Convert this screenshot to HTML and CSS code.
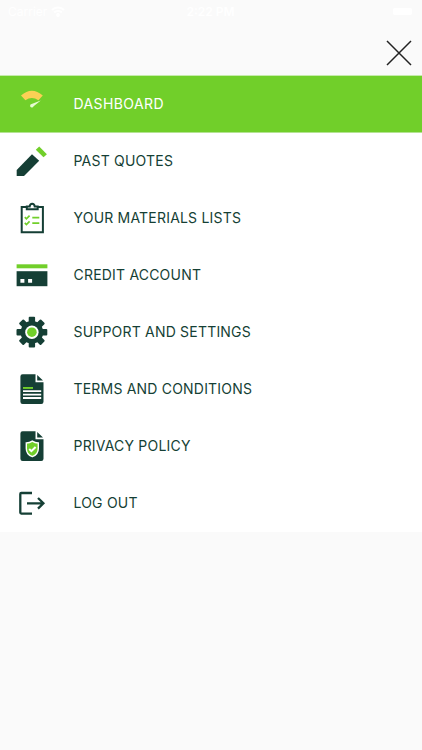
FILE: index.html
```html
<!DOCTYPE html>
<html lang="en">
<head>
    <meta charset="UTF-8">
    <title>Menu</title>
    <link rel="stylesheet" href="styles.css">
</head>
<body>
<header class="header">
    <div class="status">
        <div class="carrier">
            <span>Carrier</span>
            <svg class="wifi" viewBox="0 0 14 11">
                <path d="M1 4a8.500 8.500 0 0 1 12 0M3.200 6.500a5.400 5.400 0 0 1 7.600 0"/>
                <circle cx="7" cy="9" r="1"/>
            </svg>
        </div>
        <span class="time">2:22 PM</span>
        <div class="battery"><i></i></div>
    </div>
    <button class="close" aria-label="Close">
        <svg viewBox="0 0 26 26"><path d="M1 1l24 24M25 1L1 25"/></svg>
    </button>
</header>
<ul class="menu">
    <li class="active">
        <svg class="icon" viewBox="0 0 32 32">
            <path class="yellow" d="M5 7.500Q15.800 -2 26.800 7.500L22.400 12.200Q15.800 7.800 9.400 12.200Z"/>
            <path class="pale" d="M24.800 12.600L17.600 18.200A1.800 1.800 0 1 1 15.600 15.900Z"/>
        </svg>
        <span>DASHBOARD</span>
    </li>
    <li>
        <svg class="icon" viewBox="0 0 32 32">
            <path class="dark" d="M.7 25L16 9.200L23.200 15.700L8 31H.7Z"/>
            <path class="green" d="M23.200 1.600L30.900 9.200L27.500 12.200L19.800 4.700Z"/>
        </svg>
        <span>PAST QUOTES</span>
    </li>
    <li>
        <svg class="icon" viewBox="0 0 32 32">
            <path class="line" d="M10.500 4.900H5.700V30.300H26.900V4.900H22M10.800 7.200V4.500H13.700Q14 1.800 16.200 1.800T18.700 4.500H21.700V7.200Z"/>
            <path class="line tick" d="M8.800 15.200l1.600 1.600 3.200-3.200M8.800 20.900l1.600 1.600 3.200-3.200M16.300 15.700h7M16.300 21.200h7"/>
        </svg>
        <span>YOUR MATERIALS LISTS</span>
    </li>
    <li>
        <svg class="icon" viewBox="0 0 32 32">
            <path class="green" d="M.6 5.300h30.800v4H.6z"/>
            <path class="dark" d="M.6 12.200h30.800v15H.6z"/>
            <path class="white" d="M4.400 20h4v3.700h-4zM12.100 20h4v3.700h-4z"/>
        </svg>
        <span>CREDIT ACCOUNT</span>
    </li>
    <li>
        <svg class="icon" viewBox="0 0 32 32">
            <g class="dark" transform="translate(15.900 16.200)">
                <circle r="11.300"/>
                <rect x="-3.200" y="-15.400" width="6.400" height="30.800" rx="1"/>
                <rect x="-3.200" y="-15.400" width="6.400" height="30.800" rx="1" transform="rotate(45)"/>
                <rect x="-3.200" y="-15.400" width="6.400" height="30.800" rx="1" transform="rotate(90)"/>
                <rect x="-3.200" y="-15.400" width="6.400" height="30.800" rx="1" transform="rotate(135)"/>
            </g>
            <circle class="white" cx="15.900" cy="16.200" r="6.700"/>
            <circle class="green" cx="15.900" cy="16.200" r="4.800"/>
        </svg>
        <span>SUPPORT AND SETTINGS</span>
    </li>
    <li>
        <svg class="icon" viewBox="0 0 32 32">
            <path class="dark" d="M7 1.300H19.500V9.300H27.500V28.700a2.200 2.200 0 0 1-2.200 2.200H6.600a2.200 2.200 0 0 1-2.200-2.200V3.500A2.200 2.200 0 0 1 6.600 1.300ZM21.200 1.900L27 7.600H21.200Z"/>
            <path class="green" d="M7 14h10v1.900H7z"/>
            <path class="white" d="M7 17.300h18.200v1.800H7zM7 20.700h18.200v1.800H7zM7 24.100h18.200v1.900H7z"/>
        </svg>
        <span>TERMS AND CONDITIONS</span>
    </li>
    <li>
        <svg class="icon" viewBox="0 0 32 32">
            <path class="dark" d="M7 1.300H19.500V9.300H27.500V28.700a2.200 2.200 0 0 1-2.200 2.200H6.600a2.200 2.200 0 0 1-2.200-2.200V3.500A2.200 2.200 0 0 1 6.600 1.300ZM21.200 1.900L27 7.600H21.200Z"/>
            <path class="shield" d="M16.300 11.100Q19 13 22.300 13V18.500Q22.300 24.500 16.300 26.700Q10.300 24.500 10.300 18.500V13Q13.600 13 16.300 11.100Z"/>
            <path class="line check" d="M13.200 19l2.200 2.200 4.200-4.200"/>
        </svg>
        <span>PRIVACY POLICY</span>
    </li>
    <li>
        <svg class="icon" viewBox="0 0 32 32">
            <path class="line exit" d="M16 6H5.300Q4.300 6 4.300 7V25.600Q4.300 26.600 5.300 26.600H16M11 16.300H27.500M22 11l5.400 5.300-5.400 5.300"/>
        </svg>
        <span>LOG OUT</span>
    </li>
</ul>
</body>
</html>
```

FILE: styles.css
```css
* {
    margin: 0;
    padding: 0;
    box-sizing: border-box;
}
body {
    background: #fafafa;
    font-family: Inter, "Liberation Sans", sans-serif;
    color: #153f35;
}
ul, li {
    list-style: none;
}
.header {
    height: 75px;
}
.status {
    display: grid;
    grid-template-columns: 1fr auto 1fr;
    align-items: center;
    height: 22px;
    padding: 0 9px 0 8px;
    font-size: 12px;
    color: #fff;
}
.carrier {
    display: flex;
    align-items: center;
    gap: 4px;
}
.wifi {
    width: 14px;
    height: 11px;
    fill: none;
    stroke: #fff;
    stroke-width: 2;
}
.time {
    font-weight: 600;
}
.battery {
    justify-self: end;
    width: 21px;
    height: 9px;
    padding: 1px;
}
.battery i {
    display: block;
    height: 7px;
    border-radius: 2px;
    background: #fff;
}
.close {
    display: block;
    width: 26px;
    height: 26px;
    margin: 18px 10px 0 auto;
    border: 0;
    background: none;
}
.close svg {
    display: block;
    fill: none;
    stroke: #222;
    stroke-width: 1.500;
}
.menu {
    background: #fff;
}
.menu li {
    display: flex;
    height: 57px;
    padding: 12px 16px 0;
    font-size: 14px;
    line-height: 32px;
    letter-spacing: 0.2px;
}
.menu .active {
    height: 58px;
    border-top: 1px solid #c6ebab;
    border-bottom: 1px solid #b4e392;
    background: #71cf2a;
    color: #fff;
    letter-spacing: 0.4px;
}
.icon {
    flex: none;
    width: 32px;
    height: 32px;
    margin-right: 25.5px;
}
.dark {
    fill: #153f35;
}
.green {
    fill: #71cf2a;
}
.yellow {
    fill: #fbd055;
}
.pale {
    fill: #e6fbd2;
}
.white {
    fill: #fff;
}
.line {
    fill: none;
    stroke: #153f35;
    stroke-width: 2;
}
.tick {
    stroke: #71cf2a;
    stroke-width: 1.700;
}
.shield {
    fill: #71cf2a;
    stroke: #fff;
    stroke-width: 1.400;
}
.check {
    stroke: #fff;
}
.exit {
    stroke-width: 2.300;
}
```
